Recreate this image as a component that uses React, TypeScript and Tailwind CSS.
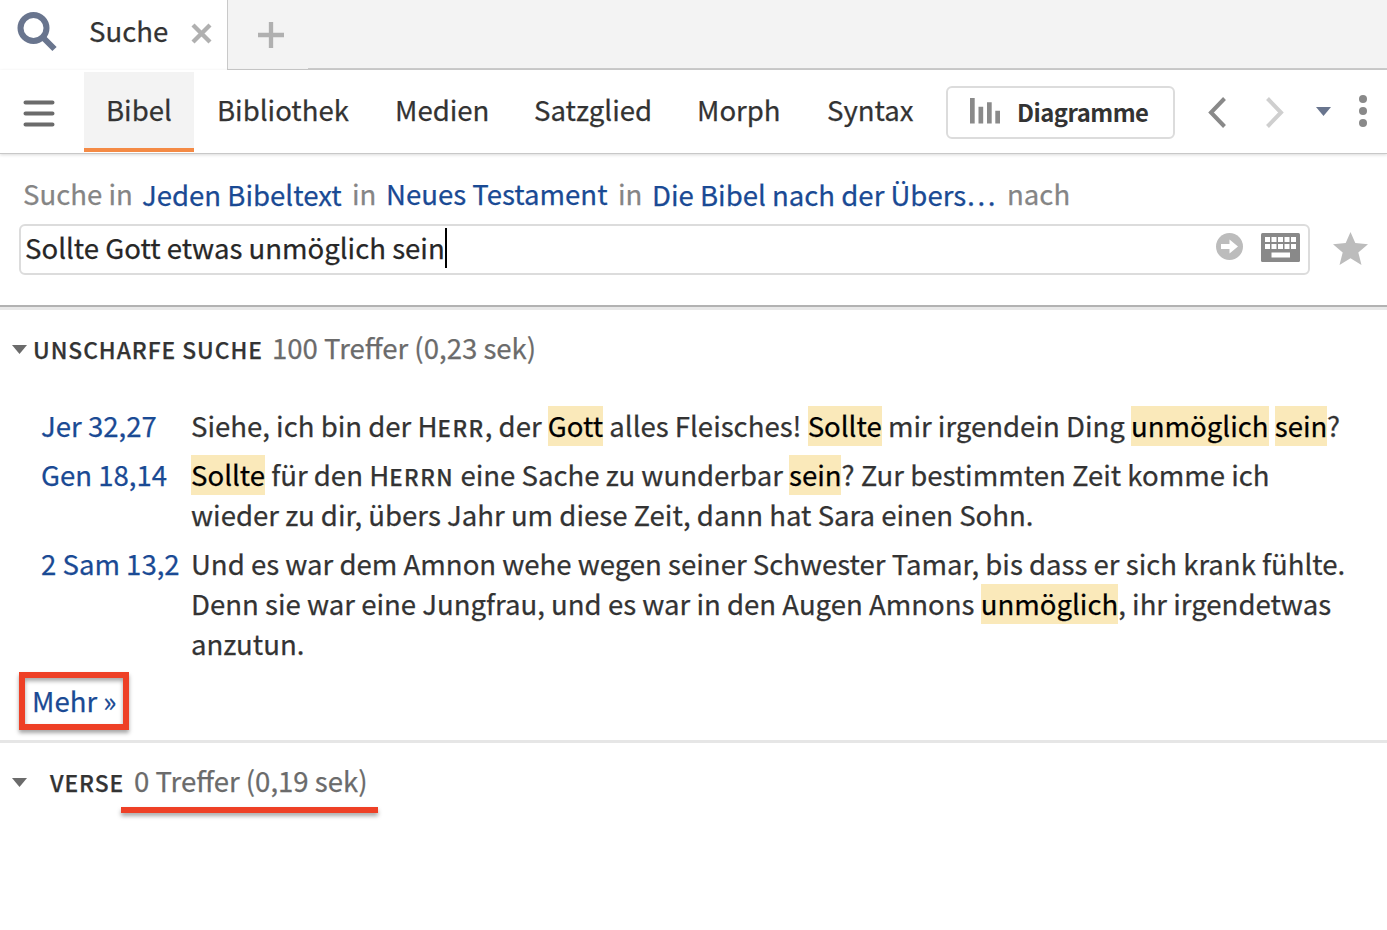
import type { ReactNode } from 'react'

const tabs = [
  { label: 'Bibliothek', width: 'w-[132px]' },
  { label: 'Medien', width: 'w-[93px]' },
  { label: 'Satzglied', width: 'w-[117px]' },
  { label: 'Morph', width: 'w-[84px]' },
  { label: 'Syntax', width: 'w-[87px]' },
]

function Mark({ children }: { children: ReactNode }) {
  return (
    <mark className="bg-transparent bg-[linear-gradient(transparent_1px,#fae9ba_1px)] pb-px text-black">{children}</mark>
  )
}

function SmallCaps({ first, rest }: { first: string; rest: string }) {
  return (
    <span>
      {first}
      <span className="text-[22.3px] font-medium leading-[0] tracking-[1.5px]">{rest}</span>
    </span>
  )
}

function Caret() {
  return (
    <svg className="mt-[2px] h-[9px] w-[15px]" viewBox="0 0 15 9" fill="#6b6b6b">
      <path d="M0 0H15L7.5 9Z" />
    </svg>
  )
}

function Keyboard() {
  return (
    <svg className="h-[29px] w-[39px]" viewBox="0 0 39 29">
      <rect width="39" height="29" rx="1.5" fill="#898989" />
      <g fill="#fff">
        {[4, 10.5, 17, 23.5, 30].map(x => (
          <g key={x}>
            <rect x={x} y="4" width="5" height="5" />
            <rect x={x} y="11" width="5" height="5" />
          </g>
        ))}
        <rect x="10.5" y="19.5" width="18.5" height="5" />
      </g>
    </svg>
  )
}

function Verse({ reference, children }: { reference: string; children: ReactNode }) {
  return (
    <div className="flex whitespace-nowrap leading-[39.8px]">
      <a className="w-[150px] shrink-0 text-[#1a4a94]">{reference}</a>
      <div>{children}</div>
    </div>
  )
}

export default function App() {
  return (
    <div className="flex h-[930px] w-[1387px] flex-col overflow-hidden bg-white font-['Noto_Sans_CJK_SC','Source_Sans_Pro',sans-serif] text-[27.57px] text-[#333] [-webkit-text-stroke:0.25px]">
      <header className="flex h-[70px] shrink-0">
        <div className="flex w-[227px] shrink-0 pl-[17px]">
          <svg className="mt-[12px] h-[40px] w-[41px]" viewBox="0 0 41 40" fill="none" stroke="#69758e">
            <circle cx="16.5" cy="16" r="13" strokeWidth="6" />
            <path d="M26 25.5L37.5 37" strokeWidth="6" />
          </svg>
          <span className="ml-[31px] w-[79px] whitespace-nowrap leading-[60px]">Suche</span>
          <svg className="ml-[23px] mt-[23px] h-[21px] w-[21px]" viewBox="0 0 21 21" stroke="#b0b0b0" strokeWidth="4.3">
            <path d="M2 2L19 19M19 2L2 19" />
          </svg>
        </div>
        <div className="w-[81px] shrink-0 border-b border-l border-[#c9c9c9] bg-[#f3f3f3] pl-[30px] pt-[22px]">
          <svg className="h-[26px] w-[26px]" viewBox="0 0 26 26" stroke="#b0b0b0" strokeWidth="4.3">
            <path d="M13 0V26M0 13H26" />
          </svg>
        </div>
        <div className="flex-1 border-b-2 border-[#cbcbcb] bg-[#f3f3f3]" />
      </header>

      <nav className="flex h-[84px] shrink-0 border-b border-[#c8c8c8] pt-[2px] shadow-[0_1px_3px_rgba(0,0,0,0.15)]">
        <svg className="ml-[23px] mt-[28px] h-[27px] w-[32px] shrink-0" viewBox="0 0 32 27" stroke="#6b6b6b" strokeWidth="4" strokeLinecap="round">
          <path d="M2.5 2.5H29.5M2.5 13.5H29.5M2.5 24.5H29.5" />
        </svg>
        <div className="ml-[29px] h-[80px] w-[110px] shrink-0 border-b-4 border-[#f48a45] bg-[#f3f3f3] pl-[22px] leading-[75px]">
          Bibel
        </div>
        <div className="ml-[23px] flex gap-[46px] whitespace-nowrap leading-[75px]">
          {tabs.map(tab => (
            <span key={tab.label} className={tab.width}>{tab.label}</span>
          ))}
        </div>
        <button className="ml-[32px] mt-[14px] flex h-[53px] w-[229px] shrink-0 rounded-[6px] border-2 border-[#dcdcdc] pl-[22px]">
          <svg className="mt-[10px] h-[26px] w-[30px]" viewBox="0 0 30 26" fill="#8a8a8a">
            <path d="M0 0H4.7V25.5H0ZM8.5 8.7H13.2V25.5H8.5ZM17 4.3H21.7V25.5H17ZM25.3 12.7H30V25.5H25.3Z" />
          </svg>
          <span className="ml-[17px] text-[23.8px] font-bold leading-[47px] tracking-[-0.5px] [-webkit-text-stroke:0]">Diagramme</span>
        </button>
        <svg className="ml-[33px] mt-[25px] h-[31px] w-[18px] shrink-0" viewBox="0 0 18 31" fill="none" stroke="#898989" strokeWidth="4">
          <path d="M16.5 1.5L3 15.5L16.5 29.5" />
        </svg>
        <svg className="ml-[40px] mt-[25px] h-[31px] w-[18px] shrink-0" viewBox="0 0 18 31" fill="none" stroke="#cfcfcf" strokeWidth="4">
          <path d="M1.5 1.5L15 15.5L1.5 29.5" />
        </svg>
        <svg className="ml-[32px] mt-[35px] h-[9px] w-[15px] shrink-0" viewBox="0 0 15 9" fill="#69758e">
          <path d="M0 0H15L7.5 9Z" />
        </svg>
        <svg className="ml-[27.5px] mt-[23px] h-[32px] w-[8px] shrink-0" viewBox="0 0 8 32" fill="#898989">
          <circle cx="4" cy="4" r="4" />
          <circle cx="4" cy="16" r="4" />
          <circle cx="4" cy="28" r="4" />
        </svg>
      </nav>

      <section className="h-[156px] shrink-0 border-b-[3px] border-[#e8e8e8]">
        <div className="h-[153px] border-b-2 border-[#b2b2b2] pt-[20px]">
          <div className="flex h-[44px] whitespace-nowrap pl-[23px] leading-[38px] text-[#858585]">
            <span className="w-[119px]">Suche in</span>
            <a className="w-[210px] leading-[40px] text-[#1a4a94]">Jeden Bibeltext</a>
            <span className="w-[34px]">in</span>
            <a className="w-[232px] text-[#1a4a94]">Neues Testament</a>
            <span className="w-[34px]">in</span>
            <a className="w-[355px] leading-[40px] text-[#1a4a94]">Die Bibel nach der Übers…</a>
            <span>nach</span>
          </div>
          <div className="flex pl-[19px] pt-[6px]">
            <div className="flex h-[51px] w-[1291px] rounded-[6px] border-2 border-[#dcdcdc] pl-[4px]">
              <div className="flex w-[1190.5px] text-[#272727]">
                <span className="w-[420px] whitespace-nowrap leading-[43px]">Sollte Gott etwas unmöglich sein</span>
                <span className="mt-[2px] h-[40px] w-[2px] bg-black" />
              </div>
              <svg className="mt-[7px] h-[27px] w-[27px]" viewBox="0 0 27 27">
                <circle cx="13.5" cy="13.5" r="13.5" fill="#bcbcbc" />
                <path d="M5 11H13.5V6.5L22 13.5L13.5 20.5V16H5Z" fill="#fff" />
              </svg>
              <div className="ml-[18.5px] mt-[7px]"><Keyboard /></div>
            </div>
            <svg className="ml-[23px] mt-[8px] h-[33px] w-[35px]" viewBox="0 0 35 33" fill="#bcbcbc">
              <path d="M17.5 0L22.3 11L35 12.3L25.3 20.4L28.5 33L17.5 26.3L6.5 33L9.7 20.4L0 12.3L12.7 11Z" />
            </svg>
          </div>
        </div>
      </section>

      <main>
        <section className="h-[433px] border-b-[3px] border-[#e6e6e6] pt-[17px]">
          <div className="flex h-[42px] items-center whitespace-nowrap pl-[12px]">
            <Caret />
            <h2 className="ml-[6px] mt-[5px] w-[239px] text-[22.8px] font-medium tracking-[0.95px]">UNSCHARFE SUCHE</h2>
            <span className="text-[#6b6b6b]">100 Treffer (0,23 sek)</span>
          </div>
          <div className="flex flex-col gap-[9.3px] pl-[41px] pt-[37px]">
            <Verse reference="Jer 32,27">
              Siehe, ich bin der <SmallCaps first="H" rest="ERR" />, der <Mark>Gott</Mark> alles Fleisches! <Mark>Sollte</Mark> mir irgendein Ding <Mark>unmöglich</Mark> <Mark>sein</Mark>?
            </Verse>
            <Verse reference="Gen 18,14">
              <Mark>Sollte</Mark> für den <SmallCaps first="H" rest="ERRN" /> eine Sache zu wunderbar <Mark>sein</Mark>? Zur bestimmten Zeit komme ich
              <br />
              wieder zu dir, übers Jahr um diese Zeit, dann hat Sara einen Sohn.
            </Verse>
            <Verse reference="2 Sam 13,2">
              Und es war dem Amnon wehe wegen seiner Schwester Tamar, bis dass er sich krank fühlte.
              <br />
              Denn sie war eine Jungfrau, und es war in den Augen Amnons <Mark>unmöglich</Mark>, ihr irgendetwas
              <br />
              anzutun.
            </Verse>
          </div>
          <a className="ml-[19px] mt-[8.4px] flex h-[58px] w-[110px] items-center whitespace-nowrap border-[6px] border-[#ee4026] pl-[7px] text-[#1a4a94] shadow-[0_3px_4px_rgba(0,0,0,0.35),inset_0_3px_4px_rgba(0,0,0,0.35)]">
            Mehr »
          </a>
        </section>

        <section className="pt-[17px]">
          <div className="flex h-[42px] items-center whitespace-nowrap pl-[12px]">
            <Caret />
            <h2 className="ml-[23px] mt-[5px] w-[84px] text-[22.8px] font-medium tracking-[0.95px]">VERSE</h2>
            <span className="text-[#6b6b6b]">0 Treffer (0,19 sek)</span>
          </div>
          <div className="ml-[121px] mt-[5px] h-[6px] w-[257px] bg-[#ee4026] shadow-[0_3px_4px_rgba(0,0,0,0.35)]" />
        </section>
      </main>
    </div>
  )
}
